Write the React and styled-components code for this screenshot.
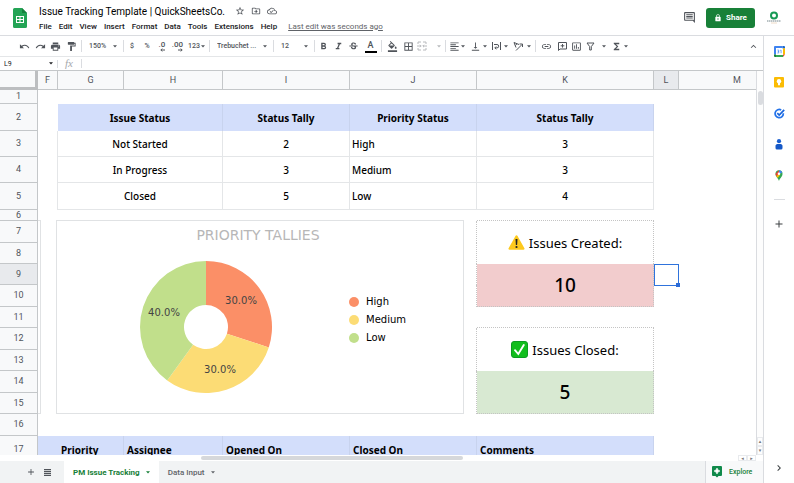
import React, { useState } from 'react';
import styled, { createGlobalStyle } from 'styled-components';
import {
    MdUndo, MdRedo, MdPrint, MdFormatPaint, MdFormatBold, MdFormatItalic,
    MdStrikethroughS, MdFormatColorFill, MdBorderAll, MdFormatAlignLeft,
    MdVerticalAlignBottom, MdLink, MdInsertChartOutlined,
    MdFunctions, MdKeyboardArrowUp, MdKeyboardArrowRight,
    MdStarBorder, MdOutlineDriveFileMove, MdOutlineCloudDone,
    MdOutlineInsertComment, MdLock, MdAdd,
} from 'react-icons/md';

const MENUS = ['File', 'Edit', 'View', 'Insert', 'Format', 'Data', 'Tools', 'Extensions', 'Help'];

const COLUMNS = [
    { name: 'F', width: 20 },
    { name: 'G', width: 66 },
    { name: 'H', width: 99 },
    { name: 'I', width: 127 },
    { name: 'J', width: 127 },
    { name: 'K', width: 177 },
    { name: 'L', width: 25 },
    { name: 'M', width: 117 },
];

const ROW_HEIGHTS = [14, 27, 26, 26, 27, 11, 22, 21, 21, 22, 21, 22, 21, 22, 21, 22, 27];

const TALLIES = {
    3: ['Not Started', 2, 'High', 3],
    4: ['In Progress', 3, 'Medium', 3],
    5: ['Closed', 5, 'Low', 4],
};

const PRIORITIES = [
    { name: 'High', share: 0.3, color: '#fb8f67', x: 101, y: 40 },
    { name: 'Medium', share: 0.3, color: '#fcdc75', x: 80, y: 109 },
    { name: 'Low', share: 0.4, color: '#c1df8b', x: 24, y: 52 },
];

const slicePath = (from, to) => {
    const point = (t, r) => {
        const a = t * 2 * Math.PI - Math.PI / 2;
        return `${66 + r * Math.cos(a)} ${66 + r * Math.sin(a)}`;
    };
    return `M${point(from, 22)} L${point(from, 66)} A66 66 0 0 1 ${point(to, 66)} L${point(to, 22)} A22 22 0 0 0 ${point(from, 22)}Z`;
};

const SheetsLogo = () => (
    <svg width="14" height="20" viewBox="0 0 14 20" aria-label="Sheets">
        <path d="M1.5 0H9l5 5v13.5a1.5 1.5 0 0 1-1.5 1.5h-11A1.5 1.5 0 0 1 0 18.500v-17A1.500 1.500 0 0 1 1.500 0Z" fill="#23a455" />
        <path d="M9 0l5 5H9Z" fill="#16803d" />
        <path d="M3 8h8v7H3Zm1 1v2h2.500V9Zm3.500 0v2H10V9ZM4 12v2h2.500v-2Zm3.500 0v2H10v-2Z" fill="#fff" fillRule="evenodd" />
    </svg>
);

const Avatar = () => (
    <svg width="16" height="14" viewBox="0 0 16 14">
        <circle cx="8" cy="4.500" r="3" fill="none" stroke="#179a54" strokeWidth="2" />
        <path d="M1 10h14" stroke="#75868a" strokeWidth="1" strokeDasharray="1.500 .5" />
        <path d="M5 12h6" stroke="#efdcc8" strokeWidth="1" />
    </svg>
);

const Caret = () => (
    <svg width="4" height="3" viewBox="0 0 4 3" fill="currentColor">
        <path d="M0 .3h4L2 2.500Z" />
    </svg>
);

const MergeIcon = () => (
    <svg width="10" height="10" viewBox="0 0 10 10" fill="none" stroke="currentColor">
        <path d="M4 1H1v2M6 1h3v2M1 7v2h3M9 7v2H6M0 5h4M10 5H6M3 3.800 4.200 5 3 6.200M7 3.800 5.800 5 7 6.200" />
    </svg>
);

const WrapIcon = () => (
    <svg width="9" height="10" viewBox="0 0 9 10" fill="none" stroke="currentColor">
        <path d="M.5 1v8M8.500 1v8M2 3.500h3a1.700 1.700 0 0 1 0 3.400H3M4.200 5.500 2.800 6.900l1.400 1.400" />
    </svg>
);

const RotateIcon = () => (
    <svg width="10" height="10" viewBox="0 0 10 10" fill="none" stroke="currentColor">
        <path d="M1 1.500 6 3.500M1 1.500 3 6.500M2.400 4.400 4 2.800M3 9.500 9 3.500M6.500 3H9.500V6" />
    </svg>
);

const FilterIcon = () => (
    <svg width="9" height="9" viewBox="0 0 9 9" fill="none" stroke="currentColor">
        <path d="M1 1h7L5.300 4.600V8H3.700V4.600Z" />
    </svg>
);

const AddCommentIcon = () => (
    <svg width="9" height="9" viewBox="0 0 9 9" fill="none" stroke="currentColor">
        <path d="M.5 8.500V.5h8v6.500H2L.5 8.500M4.500 2v3.600M2.700 3.800h3.600" />
    </svg>
);

const SheetListIcon = () => (
    <svg width="7" height="7" viewBox="0 0 7 7" fill="currentColor">
        <path d="M0 0h7v1.200H0ZM0 1.900h7v1.200H0ZM0 3.800h7V5H0ZM0 5.700h7v1.200H0Z" />
    </svg>
);

const DecimalIcon = ({ more }) => (
    <Decimal>
        {more ? '.00' : '.0'}
        <svg width="5" height="4" viewBox="0 0 5 4" stroke="currentColor" fill="none">
            <path d={more ? 'M0 2h4M2.800.6 4.200 2 2.800 3.400' : 'M5 2H1M2.200.6.800 2l1.400 1.400'} />
        </svg>
    </Decimal>
);

const WarningIcon = () => (
    <svg width="17" height="15" viewBox="0 0 17 15">
        <path d="M7.600.8a1 1 0 0 1 1.800 0l7 12.500a1 1 0 0 1-.9 1.500h-14a1 1 0 0 1-.9-1.500Z" fill="#fdc91d" />
        <path d="M7.500 4h2l-.4 6H7.900Z" fill="#222" />
        <circle cx="8.500" cy="12" r="1.100" fill="#222" />
    </svg>
);

const CheckIcon = () => (
    <svg width="17" height="17" viewBox="0 0 17 17">
        <rect x=".5" y=".5" width="16" height="16" rx="2.500" fill="#11be1d" stroke="#0c9c22" />
        <path d="M4 9.200 7.300 13 12.800 4" fill="none" stroke="#fff" strokeWidth="1.900" strokeLinecap="round" />
    </svg>
);

const CalendarIcon = () => (
    <svg width="11" height="11" viewBox="0 0 11 11">
        <path d="M2 2h7v7H2Z" fill="#fff" />
        <path d="M1 0h7.500v2H2v6.500H0V1a1 1 0 0 1 1-1Z" fill="#3f83f0" />
        <path d="M8.500 0H10a1 1 0 0 1 1 1v1.500H8.500Z" fill="#1967d2" />
        <path d="M9 2.300h2v6.200H9Z" fill="#fbbc04" />
        <path d="M2 9h7v2H2Z" fill="#34a853" />
        <path d="M0 8.500h2V11H1a1 1 0 0 1-1-1Z" fill="#188038" />
        <path d="M9 8.500h2L9 11Z" fill="#ea4335" />
        <path d="M3.400 4h1.300v1.500H3.900h.8V7H3.400M6.200 4.300l.9-.2V7.200" fill="none" stroke="#4285f4" strokeWidth=".7" />
    </svg>
);

const KeepIcon = () => (
    <svg width="10" height="11" viewBox="0 0 10 11">
        <rect width="10" height="10.500" rx="1" fill="#fbbc04" />
        <circle cx="5" cy="4.300" r="2.200" fill="#fff" />
        <path d="M4 6h2v2.300H4Z" fill="#fff" />
    </svg>
);

const TasksIcon = () => (
    <svg width="11" height="11" viewBox="0 0 11 11" fill="none">
        <path d="M9.300 5.300A4.100 4.100 0 1 1 7.200 2" stroke="#2272ea" strokeWidth="1.700" />
        <path d="M3.300 5.200 5.200 7 10.200 1.800" stroke="#1a66dc" strokeWidth="1.700" />
    </svg>
);

const ContactsIcon = () => (
    <svg width="8" height="11" viewBox="0 0 8 11">
        <circle cx="4" cy="2.200" r="2.100" fill="#1a5fd0" />
        <path d="M.5 6.500A2 2 0 0 1 2.500 5h3a2 2 0 0 1 2 1.500V9a1.500 1.500 0 0 1-1.500 1.500H2A1.500 1.500 0 0 1 .5 9Z" fill="#1558c7" />
    </svg>
);

const MapsIcon = () => (
    <svg width="8" height="11" viewBox="0 0 8 11">
        <path d="M4 11C3.600 8.500.5 7 .5 3.700A3.500 3.500 0 0 1 7.500 3.700C7.500 7 4.400 8.500 4 11Z" fill="#34a853" />
        <path d="M1.300 6.200A4 4 0 0 1 .5 3.700L4 .2v3.500Z" fill="#ea4335" />
        <path d="M4 .2a3.500 3.500 0 0 1 3.300 2.300L4 3.700Z" fill="#4285f4" />
        <path d="M1.300 6.200 4 3.700 5 5 2.700 8Z" fill="#fbbc04" />
        <circle cx="4" cy="3.700" r="1.300" fill="#fff" />
    </svg>
);

const ExploreIcon = () => (
    <svg width="10" height="12" viewBox="0 0 10 12">
        <path d="M1 0h8a1 1 0 0 1 1 1v8a1 1 0 0 1-1 1H6.500L5 11.500 3.500 10H1a1 1 0 0 1-1-1V1a1 1 0 0 1 1-1Z" fill="#108a4b" />
        <path d="M5 2 6 4l2 1-2 1-1 2-1-2-2-1 2-1Z" fill="#fff" stroke="#fff" strokeWidth=".6" />
    </svg>
);

const Dropdown = ({ label, width, children }) => (
    <SelectBox $width={width}>
        <select aria-label={label}>
            <option>{children}</option>
        </select>
        <Caret />
    </SelectBox>
);

const PriorityChart = () => {
    let start = 0;
    return (
        <ChartCard>
            <ChartTitle>PRIORITY TALLIES</ChartTitle>
            <ChartBody>
                <svg width="132" height="132" viewBox="0 0 132 132">
                    {PRIORITIES.map((p) => {
                        const from = start;
                        start += p.share;
                        return (
                            <g key={p.name}>
                                <path d={slicePath(from, start)} fill={p.color} />
                                <SliceLabel x={p.x} y={p.y}>{(p.share * 100).toFixed(1)}%</SliceLabel>
                            </g>
                        );
                    })}
                </svg>
                <Legend>
                    {PRIORITIES.map((p) => (
                        <LegendItem key={p.name} $color={p.color}>{p.name}</LegendItem>
                    ))}
                </Legend>
            </ChartBody>
        </ChartCard>
    );
};

const rowCells = (n) => {
    if (n === 2) {
        return (
            <>
                <Cell />
                <HeadCell colSpan={2}>Issue Status</HeadCell>
                <HeadCell>Status Tally</HeadCell>
                <HeadCell>Priority Status</HeadCell>
                <HeadCell>Status Tally</HeadCell>
                <Cell colSpan={2} />
            </>
        );
    }
    if (TALLIES[n]) {
        const [status, count, priority, total] = TALLIES[n];
        return (
            <>
                <Cell $edge />
                <DataCell colSpan={2}>{status}</DataCell>
                <DataCell>{count}</DataCell>
                <DataCell $left>{priority}</DataCell>
                <DataCell>{total}</DataCell>
                <Cell colSpan={2} />
            </>
        );
    }
    if (n === 7) {
        return (
            <>
                <Cell><ChartSliver /></Cell>
                <Cell><PriorityChart /></Cell>
                <Cell colSpan={3} $dotted />
                <CardTitle rowSpan={2}><CardLabel><WarningIcon />Issues Created:</CardLabel></CardTitle>
                <Cell colSpan={2} />
            </>
        );
    }
    if (n === 9) {
        return (
            <>
                <Cell colSpan={5} $dotted />
                <CardValue rowSpan={2} $color="#f2cccd">10</CardValue>
                <Cell><Selection /></Cell>
                <Cell />
            </>
        );
    }
    if (n === 12) {
        return (
            <>
                <Cell colSpan={5} $dotted />
                <CardTitle rowSpan={2}><CardLabel><CheckIcon />Issues Closed:</CardLabel></CardTitle>
                <Cell colSpan={2} />
            </>
        );
    }
    if (n === 14) {
        return (
            <>
                <Cell colSpan={5} $dotted />
                <CardValue rowSpan={2} $color="#d8e9d2">5</CardValue>
                <Cell colSpan={2} />
            </>
        );
    }
    if ([8, 10, 13, 15].includes(n)) {
        return (
            <>
                <Cell colSpan={5} $dotted />
                <Cell colSpan={2} />
            </>
        );
    }
    if (n === 6 || n === 11) {
        return (
            <>
                <Cell colSpan={5} />
                <Cell $dottedBottom />
                <Cell colSpan={2} />
            </>
        );
    }
    if (n === 17) {
        return (
            <>
                <HeadCell $plain />
                <HeadCell $left>Priority</HeadCell>
                <HeadCell $left>Assignee</HeadCell>
                <HeadCell $left>Opened On</HeadCell>
                <HeadCell $left>Closed On</HeadCell>
                <HeadCell $left>Comments</HeadCell>
                <Cell colSpan={2} />
            </>
        );
    }
    return <Cell colSpan={8} />;
};

const App = () => {
    const [cellName, setCellName] = useState('L9');
    const [formula, setFormula] = useState('');

    return (
        <>
            <GlobalStyle />
            <Page>
                <Header>
                    <SheetsLogo />
                    <Heading>
                        <TitleRow>
                            <Title>Issue Tracking Template | QuickSheetsCo.</Title>
                            <TitleButton aria-label="Star"><MdStarBorder /></TitleButton>
                            <TitleButton aria-label="Move"><MdOutlineDriveFileMove /></TitleButton>
                            <TitleButton aria-label="Saved to Drive"><MdOutlineCloudDone /></TitleButton>
                        </TitleRow>
                        <MenuRow>
                            {MENUS.map((menu) => <MenuButton key={menu}>{menu}</MenuButton>)}
                            <LastEdit href="#history">Last edit was seconds ago</LastEdit>
                        </MenuRow>
                    </Heading>
                    <CommentButton aria-label="Comments"><MdOutlineInsertComment /></CommentButton>
                    <ShareButton><MdLock />Share</ShareButton>
                    <AvatarButton aria-label="Account"><Avatar /></AvatarButton>
                </Header>
                <Main>
                    <Workspace>
                        <Toolbar>
                            <Tool $width={16} aria-label="Undo"><MdUndo /></Tool>
                            <Tool $width={16} aria-label="Redo"><MdRedo /></Tool>
                            <Tool $width={15} aria-label="Print"><MdPrint /></Tool>
                            <Tool $width={17} aria-label="Paint format"><MdFormatPaint /></Tool>
                            <Divider />
                            <Dropdown label="Zoom" width={39}>150%</Dropdown>
                            <Divider />
                            <Tool $width={14}>$</Tool>
                            <Tool $width={16}>%</Tool>
                            <Tool $width={14} aria-label="Fewer decimals"><DecimalIcon /></Tool>
                            <Tool $width={17} aria-label="More decimals"><DecimalIcon more /></Tool>
                            <MenuTool $width={22}>123<Caret /></MenuTool>
                            <Divider />
                            <Dropdown label="Font" width={61}>Trebuchet ...</Dropdown>
                            <Divider />
                            <Dropdown label="Font size" width={38}>12</Dropdown>
                            <Divider />
                            <Tool $width={15} aria-label="Bold"><MdFormatBold /></Tool>
                            <Tool $width={15} aria-label="Italic"><MdFormatItalic /></Tool>
                            <Tool $width={15} aria-label="Strikethrough"><MdStrikethroughS /></Tool>
                            <Tool $width={19} aria-label="Text color"><ColorLetter>A</ColorLetter></Tool>
                            <Divider />
                            <Tool $width={18} aria-label="Fill color"><MdFormatColorFill /></Tool>
                            <Tool $width={14} aria-label="Borders"><MdBorderAll /></Tool>
                            <MenuTool $width={29} $faded aria-label="Merge cells"><MergeIcon /><Caret /></MenuTool>
                            <Divider />
                            <MenuTool $width={21} aria-label="Horizontal align"><MdFormatAlignLeft /><Caret /></MenuTool>
                            <MenuTool $width={22} aria-label="Vertical align"><MdVerticalAlignBottom /><Caret /></MenuTool>
                            <MenuTool $width={21} aria-label="Text wrapping"><WrapIcon /><Caret /></MenuTool>
                            <MenuTool $width={23} aria-label="Text rotation"><RotateIcon /><Caret /></MenuTool>
                            <Divider />
                            <Tool $width={18} aria-label="Insert link"><MdLink /></Tool>
                            <Tool $width={14} aria-label="Insert comment"><AddCommentIcon /></Tool>
                            <Tool $width={15} aria-label="Insert chart"><MdInsertChartOutlined /></Tool>
                            <MenuTool $width={25} aria-label="Filter"><FilterIcon /><Caret /></MenuTool>
                            <MenuTool $width={22} aria-label="Functions"><MdFunctions /><Caret /></MenuTool>
                            <CollapseTool $width={16} aria-label="Hide menus"><MdKeyboardArrowUp /></CollapseTool>
                        </Toolbar>
                        <FormulaBar>
                            <NameBox>
                                <input aria-label="Name box" value={cellName} onChange={(e) => setCellName(e.target.value)} />
                                <Caret />
                            </NameBox>
                            <label htmlFor="formula">fx</label>
                            <input id="formula" value={formula} onChange={(e) => setFormula(e.target.value)} />
                        </FormulaBar>
                        <SheetArea>
                            <Viewport>
                                <Grid>
                                    <colgroup>
                                        <Col $width={38} />
                                        {COLUMNS.map((c) => <Col key={c.name} $width={c.width} />)}
                                    </colgroup>
                                    <thead>
                                        <tr>
                                            <Corner />
                                            {COLUMNS.map((c) => (
                                                <ColumnHead key={c.name} scope="col" $active={c.name === 'L'}>{c.name}</ColumnHead>
                                            ))}
                                        </tr>
                                    </thead>
                                    <tbody>
                                        {ROW_HEIGHTS.map((height, i) => (
                                            <Row key={i} $height={height}>
                                                <RowHead scope="row" $active={i === 8}>{i + 1}</RowHead>
                                                {rowCells(i + 1)}
                                            </Row>
                                        ))}
                                    </tbody>
                                </Grid>
                            </Viewport>
                            <VerticalScroll>
                                <VerticalThumb />
                                <ScrollStep>▴</ScrollStep>
                                <ScrollStep>▾</ScrollStep>
                            </VerticalScroll>
                        </SheetArea>
                        <HorizontalScroll>
                            <HorizontalThumb />
                            <ScrollStep>◂</ScrollStep>
                            <ScrollStep>▸</ScrollStep>
                        </HorizontalScroll>
                        <TabBar>
                            <BarButton aria-label="Add sheet"><MdAdd /></BarButton>
                            <BarButton aria-label="All sheets"><SheetListIcon /></BarButton>
                            <Tab $active>PM Issue Tracking<Caret /></Tab>
                            <Tab>Data Input<Caret /></Tab>
                            <ExploreButton><ExploreIcon />Explore</ExploreButton>
                        </TabBar>
                    </Workspace>
                    <SidePanel>
                        <SideButton aria-label="Calendar"><CalendarIcon /></SideButton>
                        <SideButton aria-label="Keep"><KeepIcon /></SideButton>
                        <SideButton aria-label="Tasks"><TasksIcon /></SideButton>
                        <SideButton aria-label="Contacts"><ContactsIcon /></SideButton>
                        <SideButton aria-label="Maps"><MapsIcon /></SideButton>
                        <SideRule />
                        <SideButton aria-label="Get add-ons"><MdAdd /></SideButton>
                        <HideButton aria-label="Hide side panel"><MdKeyboardArrowRight /></HideButton>
                    </SidePanel>
                </Main>
            </Page>
        </>
    );
};

export default App;

const GlobalStyle = createGlobalStyle`
    * {
        box-sizing: border-box;
    }
    body {
        margin: 0;
        font-family: Roboto, "Liberation Sans", sans-serif;
        color: #202124;
        background: #fff;
    }
    button, input, select {
        margin: 0;
        padding: 0;
        border: 0;
        background: none;
        font: inherit;
        color: inherit;
        outline: none;
    }
    svg {
        display: block;
        flex: none;
    }
`;

const Page = styled.div`
    display: flex;
    flex-direction: column;
    height: 100vh;
    overflow: hidden;
`;

const Header = styled.header`
    display: flex;
    align-items: center;
    height: 36px;
    flex: none;
    padding: 0 12px 0 13px;
    border-bottom: 1px solid #dadce0;
`;

const Heading = styled.div`
    flex: 1;
    padding-left: 12px;
`;

const TitleRow = styled.div`
    display: flex;
    align-items: center;
    height: 17px;
`;

const Title = styled.h1`
    margin: 0 7px 0 0;
    font-size: 10px;
    font-weight: 400;
    color: #000;
    white-space: nowrap;
`;

const TitleButton = styled.button`
    width: 16px;
    font-size: 10px;
    color: #50545a;
    display: grid;
    place-items: center;
`;

const MenuRow = styled.nav`
    display: flex;
    align-items: center;
    gap: 7px;
    height: 13px;
    font-size: 8px;
`;

const MenuButton = styled.button`
    font-weight: 500;
`;

const LastEdit = styled.a`
    margin-left: 4px;
    color: #5f6368;
    white-space: nowrap;
`;

const CommentButton = styled.button`
    margin-right: 10px;
    font-size: 13px;
    color: #50545a;
`;

const ShareButton = styled.button`
    display: flex;
    align-items: center;
    justify-content: center;
    gap: 4px;
    width: 49px;
    height: 20px;
    border-radius: 3px;
    background: #188038;
    color: #fff;
    font-size: 8px;
    font-weight: 700;
`;

const AvatarButton = styled.button`
    margin-left: 11px;
`;

const Main = styled.div`
    display: flex;
    flex: 1;
    min-height: 0;
`;

const Workspace = styled.main`
    display: flex;
    flex-direction: column;
    flex: 1;
    min-width: 0;
`;

const Toolbar = styled.div`
    display: flex;
    align-items: center;
    height: 21px;
    flex: none;
    padding: 0 2px 0 16px;
    border-bottom: 1px solid #e4e6e8;
    font-size: 7px;
    font-weight: 500;
    color: #50545a;
`;

const Tool = styled.button`
    display: flex;
    align-items: center;
    justify-content: center;
    width: ${({ $width }) => $width}px;
    height: 16px;
    flex: none;

    svg {
        font-size: 11px;
    }
`;

const MenuTool = styled(Tool)`
    justify-content: space-between;
    padding: 0 3px 0 2px;
    color: ${({ $faded }) => ($faded ? '#b8babd' : 'inherit')};
`;

const CollapseTool = styled(Tool)`
    margin-left: auto;
`;

const Decimal = styled.span`
    display: flex;
    flex-direction: column;
    align-items: flex-end;
    line-height: 7px;
    font-size: 8px;
`;

const ColorLetter = styled.span`
    width: 12px;
    border-bottom: 2px solid #000;
    font-size: 9px;
    line-height: 11px;
`;

const Divider = styled.span`
    width: 1px;
    height: 12px;
    margin: 0 1px;
    flex: none;
    background: #dadce0;
`;

const SelectBox = styled.span`
    display: flex;
    align-items: center;
    width: ${({ $width }) => $width}px;
    flex: none;
    padding: 0 5px 0 6px;

    select {
        appearance: none;
        flex: 1;
        min-width: 0;
    }
`;

const FormulaBar = styled.div`
    display: flex;
    align-items: center;
    height: 13px;
    flex: none;
    font-size: 7px;

    label {
        width: 24px;
        padding-left: 7px;
        border-right: 1px solid #dadce0;
        font-family: "Liberation Serif", serif;
        font-size: 11px;
        line-height: 9px;
        font-style: italic;
        color: #a5a8ac;
    }
    > input {
        flex: 1;
        padding: 0 4px;
    }
`;

const NameBox = styled.div`
    display: flex;
    align-items: center;
    width: 58px;
    padding: 0 4px;
    border-right: 1px solid #dadce0;
    color: #202124;

    input {
        flex: 1;
        min-width: 0;
    }
`;

const SheetArea = styled.div`
    display: flex;
    flex: 1;
    min-height: 0;
    border-top: 1px solid #c4c7c9;
`;

const Viewport = styled.div`
    flex: 1;
    min-width: 0;
    overflow: hidden;
`;

const Grid = styled.table`
    table-layout: fixed;
    width: 796px;
    border-collapse: separate;
    border-spacing: 0;
    font-family: "Noto Sans", sans-serif;
    font-size: 10px;
    line-height: 14px;
    color: #000;

    th, td {
        padding: 0;
    }
`;

const Col = styled.col`
    width: ${({ $width }) => $width}px;
`;

const Corner = styled.td`
    height: 19px;
    background: #f8f9fa;
    border-right: 3px solid #bcbec0;
    border-bottom: 3px solid #bcbec0;
`;

const ColumnHead = styled.th`
    border-right: 1px solid #c4c7c9;
    border-bottom: 1px solid #c4c7c9;
    background: ${({ $active }) => ($active ? '#e8eaed' : '#f8f9fa')};
    color: #50545a;
    font-family: Roboto, sans-serif;
    font-size: 9px;
    font-weight: 400;
`;

const Row = styled.tr`
    height: ${({ $height }) => $height}px;
`;

const RowHead = styled.th`
    border-right: 1px solid #c4c7c9;
    border-bottom: 1px solid #c4c7c9;
    background: ${({ $active }) => ($active ? '#e8eaed' : '#f8f9fa')};
    color: #50545a;
    font-family: Roboto, sans-serif;
    font-size: 9px;
    line-height: 9px;
    font-weight: 400;
`;

const Cell = styled.td`
    position: relative;
    border-right: ${({ $edge, $dotted }) => ($edge ? '1px solid #e4e6e8' : $dotted ? '1px dotted #c4c4c4' : '0')};
    border-bottom: ${({ $dottedBottom }) => ($dottedBottom ? '1px dotted #c4c4c4' : '0')};
`;

const HeadCell = styled.th`
    && {
        padding: ${({ $left }) => ($left ? '0 3px' : '0')};
    }
    border-right: 1px solid ${({ $plain }) => ($plain ? '#d3defb' : '#c8d3ee')};
    background: #d3defb;
    text-align: ${({ $left }) => ($left ? 'left' : 'center')};
    font-weight: 700;
`;

const DataCell = styled.td`
    && {
        padding: ${({ $left }) => ($left ? '0 2px' : '0')};
    }
    border-right: 1px solid #e4e6e8;
    border-bottom: 1px solid #e4e6e8;
    text-align: ${({ $left }) => ($left ? 'left' : 'center')};
    font-weight: 500;
`;

const CardTitle = styled.td`
    border-right: 1px dotted #c4c4c4;
    font-size: 13px;
`;

const CardLabel = styled.span`
    display: flex;
    align-items: center;
    justify-content: center;
    gap: 4px;
`;

const CardValue = styled.td`
    border-right: 1px dotted #c4c4c4;
    border-bottom: 1px dotted #c4c4c4;
    background: ${({ $color }) => $color};
    text-align: center;
    font-size: 19px;
    line-height: 24px;
    font-weight: 500;
`;

/* the active cell's outline and fill handle lie over the grid */
const Selection = styled.div`
    position: absolute;
    inset: 0 0 -1px 0;
    border: 1px solid #2f73dc;

    &::after {
        content: '';
        position: absolute;
        right: -2px;
        bottom: -2px;
        width: 4px;
        height: 4px;
        background: #2a6bd8;
    }
`;

/* charts float over the cells they are anchored to */
const ChartCard = styled.div`
    position: absolute;
    z-index: 1;
    top: -1px;
    left: -2px;
    width: 408px;
    height: 194px;
    border: 1px solid #e0e2e4;
    background: #fff;
`;

const ChartSliver = styled(ChartCard)`
    left: 0;
    width: 3px;
    border-left: 0;
`;

const ChartTitle = styled.h2`
    margin: 5px 0 0;
    padding-right: 4px;
    text-align: center;
    font-family: "DejaVu Sans", sans-serif;
    font-size: 14px;
    line-height: 18px;
    font-weight: 400;
    color: #b7b7b7;
`;

const ChartBody = styled.div`
    display: flex;
    gap: 77px;
    padding: 17px 0 0 83px;
`;

const SliceLabel = styled.text`
    font-family: "DejaVu Sans", sans-serif;
    font-size: 10px;
    text-anchor: middle;
    dominant-baseline: middle;
    fill: #444;
`;

const Legend = styled.ul`
    margin: 0;
    padding: 32px 0 0;
    list-style: none;
`;

const LegendItem = styled.li`
    display: flex;
    align-items: center;
    gap: 7px;
    height: 18px;
    font-family: "DejaVu Sans", sans-serif;
    font-size: 10px;

    &::before {
        content: '';
        width: 10px;
        height: 10px;
        border-radius: 50%;
        background: ${({ $color }) => $color};
    }
`;

const VerticalScroll = styled.div`
    display: flex;
    flex-direction: column;
    align-items: center;
    width: 7px;
    padding-top: 19px;
    border-left: 1px solid #dadce0;
    background: #fdfdfd;
`;

const VerticalThumb = styled.div`
    width: 5px;
    height: 14px;
    margin: 1px 0 auto;
    border-radius: 3px;
    background: #dadce0;
`;

const ScrollStep = styled.button`
    width: 9px;
    height: 9px;
    border: 1px solid #e8eaed;
    font-family: "DejaVu Sans", sans-serif;
    font-size: 5px;
    line-height: 5px;
    color: #777;
    overflow: hidden;

    ${VerticalScroll} & {
        width: 6px;
    }
`;

const HorizontalScroll = styled.div`
    display: flex;
    align-items: center;
    height: 6px;
    flex: none;
    padding: 0 7px 0 201px;
    background: #fff;

    ${ScrollStep} {
        height: 6px;
    }
`;

const HorizontalThumb = styled.div`
    width: 262px;
    height: 4px;
    margin-right: auto;
    border-radius: 2px;
    background: #d6d8db;
`;

const TabBar = styled.div`
    display: flex;
    align-items: stretch;
    height: 22px;
    flex: none;
    padding-left: 22px;
    background: #f1f3f4;
`;

const BarButton = styled.button`
    display: grid;
    place-items: center;
    width: 17px;
    font-size: 10px;
    color: #50545a;
`;

const Tab = styled.button`
    display: flex;
    align-items: center;
    gap: 6px;
    margin-left: ${({ $active }) => ($active ? '8px' : '0')};
    padding: 0 9px;
    background: ${({ $active }) => ($active ? '#fff' : 'none')};
    color: ${({ $active }) => ($active ? '#188038' : '#5f6368')};
    font-size: 8px;
    font-weight: ${({ $active }) => ($active ? 700 : 500)};
`;

const ExploreButton = styled.button`
    display: flex;
    align-items: center;
    gap: 7px;
    width: 58px;
    margin-left: auto;
    padding-left: 6px;
    border-left: 1px solid #dadce0;
    background: #f8f9fa;
    color: #188038;
    font-size: 7px;
    font-weight: 500;
`;

const SidePanel = styled.aside`
    display: flex;
    flex-direction: column;
    align-items: center;
    width: 31px;
    flex: none;
    border-left: 1px solid #dadce0;
`;

const SideButton = styled.button`
    display: grid;
    place-items: center;
    width: 30px;
    height: 31px;
    font-size: 12px;
    color: #3c4043;
`;

const SideRule = styled.hr`
    width: 11px;
    height: 1px;
    margin: 8px 0;
    border: 0;
    background: #dadce0;
`;

const HideButton = styled(SideButton)`
    margin-top: auto;
`;
